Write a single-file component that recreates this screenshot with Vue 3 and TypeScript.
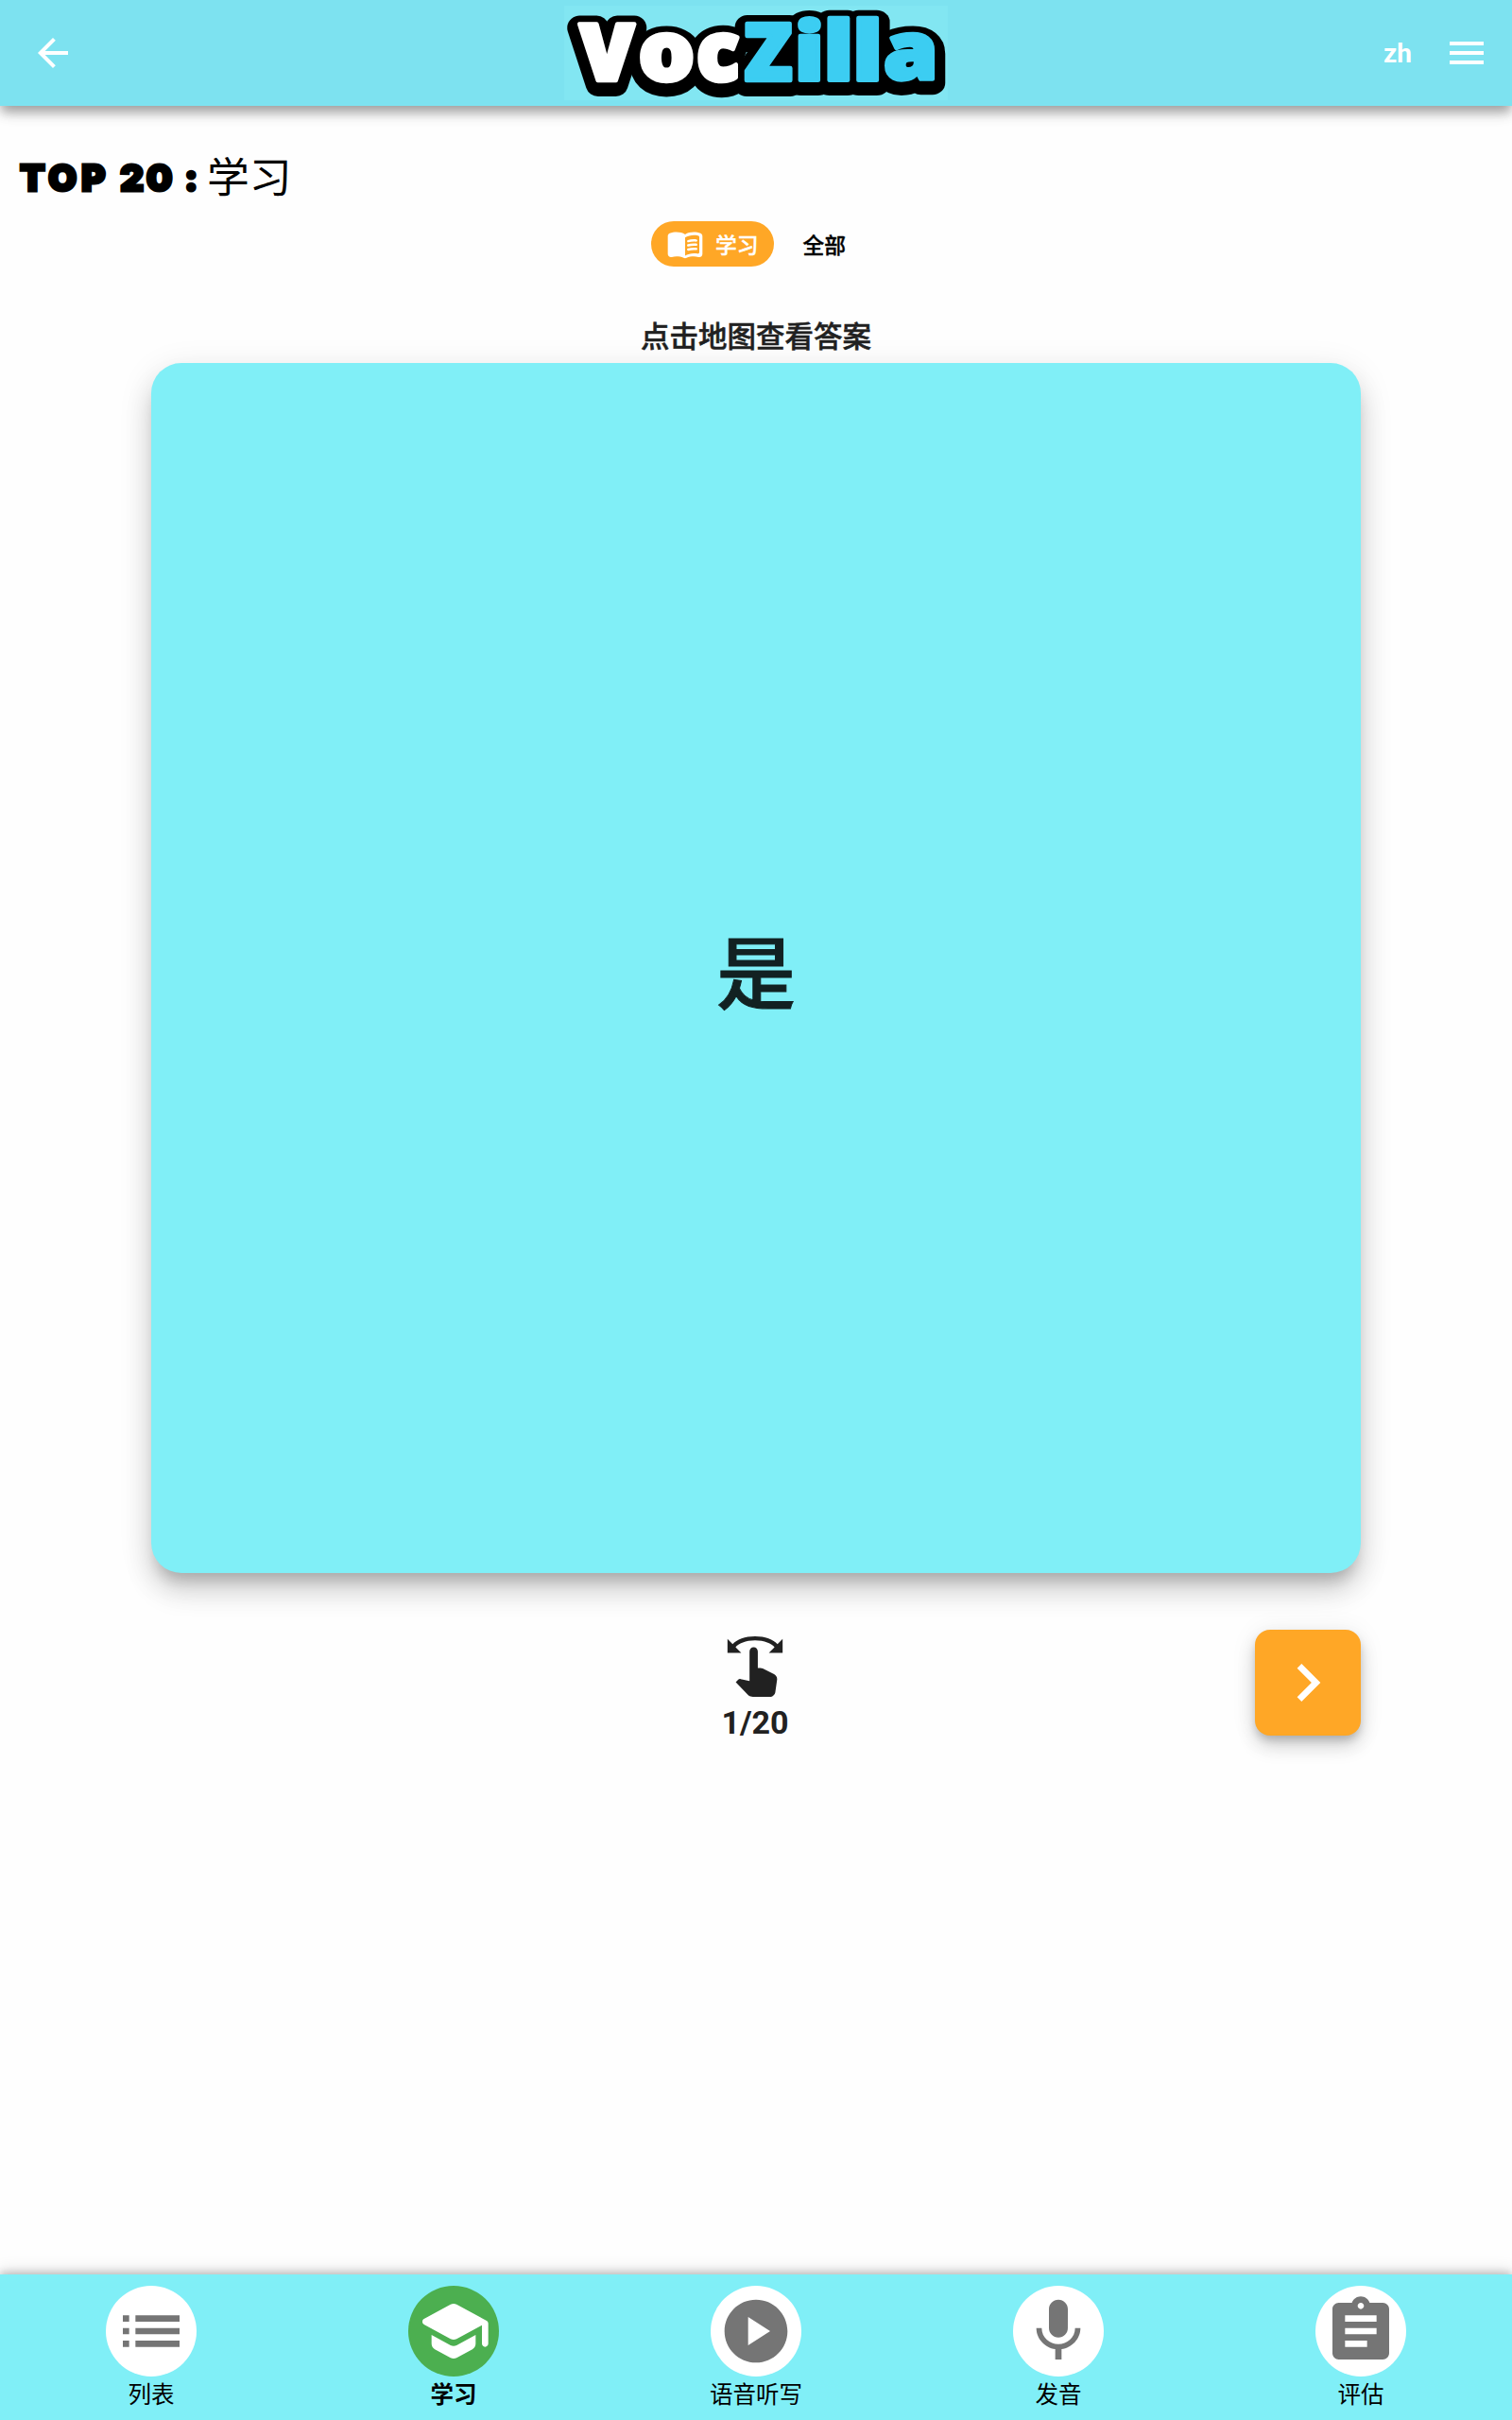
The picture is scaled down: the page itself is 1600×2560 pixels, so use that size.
<script setup lang="ts">
interface Letter {
  char: string
  x: number
  y: number
  sx: number
  sy: number
  color: string
}

interface NavItem {
  label: string
  path: string
  active?: boolean
}

const letters: Letter[] = [
  { char: 'V', x: 16.25, y: 78.75, sx: 0.836, sy: 0.831, color: '#fff' },
  { char: 'o', x: 78.5, y: 78.9, sx: 0.9375, sy: 0.868, color: '#fff' },
  { char: 'c', x: 139.9, y: 78.9, sx: 0.844, sy: 0.868, color: '#fff' },
  { char: 'Z', x: 190.6, y: 78.75, sx: 0.833, sy: 0.831, color: '#3ccdf2' },
  { char: 'i', x: 243.4, y: 78.75, sx: 0.976, sy: 0.851, color: '#3ccdf2' },
  { char: 'l', x: 274.25, y: 78.75, sx: 1, sy: 0.862, color: '#3ccdf2' },
  { char: 'l', x: 305, y: 78.75, sx: 1, sy: 0.862, color: '#3ccdf2' },
  { char: 'a', x: 338, y: 78, sx: 0.925, sy: 0.853, color: '#3ccdf2' },
]

const place = (l: Letter, dy = 0): string =>
  `translate(${l.x} ${l.y + dy}) scale(${l.sx} ${l.sy})`

const bookLine =
  'M13.98 11.01c-.32 0-.61-.2-.71-.52-.13-.39.09-.82.48-.94 1.54-.5 3.53-.66 5.36-.45.41.05.71.42.66.83-.05.41-.42.71-.83.66-1.62-.19-3.39-.04-4.73.39-.08.01-.16.03-.23.03z'

const nav: NavItem[] = [
  {
    label: '列表',
    path: 'M3 13h2v-2H3v2zm0 4h2v-2H3v2zm0-8h2V7H3v2zm4 4h14v-2H7v2zm0 4h14v-2H7v2zM7 7v2h14V7H7z',
  },
  {
    label: '学习',
    active: true,
    path: 'M5 13.18v2.81c0 .73.4 1.41 1.04 1.76l5 2.73c.6.33 1.32.33 1.92 0l5-2.73c.64-.35 1.04-1.03 1.04-1.76v-2.81l-6.04 3.3c-.6.33-1.32.33-1.92 0L5 13.18zm6.04-9.66-8.43 4.6c-.69.38-.69 1.38 0 1.76l8.43 4.6c.6.33 1.32.33 1.92 0L21 10.09V16c0 .55.45 1 1 1s1-.45 1-1V9.59c0-.37-.2-.7-.52-.88l-9.52-5.19c-.6-.32-1.32-.32-1.92 0z',
  },
  {
    label: '语音听写',
    path: 'M12 2C6.48 2 2 6.48 2 12s4.48 10 10 10 10-4.48 10-10S17.52 2 12 2zM9.5 16.5v-9l7 4.5-7 4.5z',
  },
  {
    label: '发音',
    path: 'M12 14c1.66 0 2.99-1.34 2.99-3L15 5c0-1.66-1.34-3-3-3S9 3.34 9 5v6c0 1.66 1.34 3 3 3zm5.3-3c0 3-2.54 5.1-5.3 5.1S6.7 14 6.7 11H5c0 3.41 2.72 6.23 6 6.72V21h2v-3.28c3.28-.48 6-3.3 6-6.72h-1.7z',
  },
  {
    label: '评估',
    path: 'M19 3h-4.18C14.4 1.84 13.3 1 12 1c-1.3 0-2.4.84-2.82 2H5c-1.1 0-2 .9-2 2v14c0 1.1.9 2 2 2h14c1.1 0 2-.9 2-2V5c0-1.1-.9-2-2-2zm-7 0c.55 0 1 .45 1 1s-.45 1-1 1-1-.45-1-1 .45-1 1-1zm2 14H7v-2h7v2zm3-4H7v-2h10v2zm0-4H7V7h10v2z',
  },
]
</script>

<template>
  <div class="app" lang="zh-CN">
    <header class="bar">
      <div class="side">
        <svg class="i48" viewBox="0 0 24 24"><path d="M20 11H7.83l5.59-5.59L12 4l-8 8 8 8 1.41-1.41L7.83 13H20v-2z" /></svg>
      </div>
      <svg class="logo" width="406" height="100" viewBox="0 0 406 100" aria-label="VocZilla">
        <g class="outline" aria-hidden="true">
          <text v-for="(l, i) in letters" :key="i" :transform="place(l, 4)">{{ l.char }}</text>
        </g>
        <g class="face">
          <text v-for="(l, i) in letters" :key="i" :transform="place(l)" :fill="l.color" :stroke="l.color">{{ l.char }}</text>
        </g>
      </svg>
      <div class="side right">
        <span class="lang">zh</span>
        <svg class="i48" viewBox="0 0 24 24"><path d="M3 18h18v-2H3v2zm0-5h18v-2H3v2zm0-7v2h18V6H3z" /></svg>
      </div>
    </header>

    <main>
      <h1><span class="top">TOP</span><span class="num">20</span><span class="colon">:</span>学习</h1>
      <div class="chips">
        <div class="chip on">
          <svg viewBox="0 0 24 24">
            <path d="M17.5 4.5c-1.95 0-4.05.4-5.5 1.5-1.45-1.1-3.55-1.5-5.5-1.5-1.45 0-2.99.22-4.28.79C1.49 5.62 1 6.33 1 7.14v11.28c0 1.3 1.22 2.26 2.48 1.94.98-.25 2.02-.36 3.02-.36 1.56 0 3.22.26 4.56.92.6.3 1.28.3 1.87 0 1.34-.67 3-.92 4.56-.92 1 0 2.04.11 3.02.36 1.26.33 2.48-.63 2.48-1.94V7.14c0-.81-.49-1.52-1.22-1.85-1.28-.57-2.82-.79-4.27-.79zM21 17.23c0 .63-.58 1.09-1.2.98-.75-.14-1.53-.2-2.3-.2-1.7 0-4.15.65-5.5 1.5V8c1.35-.85 3.8-1.5 5.5-1.5.92 0 1.83.09 2.7.28.46.1.8.51.8.98v9.47z" />
            <path :d="bookLine" />
            <path :d="bookLine" transform="translate(0 2.66)" />
            <path :d="bookLine" transform="translate(0 5.32)" />
          </svg>
          <span>学习</span>
        </div>
        <div class="chip"><span>全部</span></div>
      </div>
      <p class="hint">点击地图查看答案</p>
      <section class="card">是</section>
      <div class="controls">
        <div></div>
        <div class="progress">
          <svg viewBox="0 0 24 24">
            <path d="M18.89 14.75l-4.09-2.04c-.28-.14-.58-.21-.89-.21H13v-6c0-.83-.67-1.5-1.5-1.5S10 5.67 10 6.5v10.74l-3.25-.74c-.33-.07-.68.03-.92.28l-.83.84 4.54 4.79c.38.38 1.14.59 1.67.59h6.16c1 0 1.84-.73 1.98-1.72l.63-4.46c.12-.85-.32-1.69-1.09-2.07z" />
            <path d="M20.13 3.87C18.69 2.17 15.6 1 12 1S5.31 2.17 3.87 3.87L2 2v5h5L4.93 4.93c1-1.29 3.7-2.43 7.07-2.43s6.07 1.14 7.07 2.43L17 7h5V2l-1.87 1.87z" />
          </svg>
          <span>1/20</span>
        </div>
        <button class="next" type="button">
          <svg viewBox="0 0 24 24"><path d="M10 6L8.59 7.41 13.17 12l-4.58 4.59L10 18l6-6z" /></svg>
        </button>
      </div>
    </main>

    <nav>
      <div v-for="item in nav" :key="item.label" class="item" :class="{ active: item.active }">
        <div class="disc"><svg viewBox="0 0 24 24"><path :d="item.path" /></svg></div>
        <span>{{ item.label }}</span>
      </div>
    </nav>
  </div>
</template>

<style>
body {
  margin: 0;
  background: #fff;
}
</style>

<style scoped>
.app {
  width: 1600px;
  height: 2560px;
  display: flex;
  flex-direction: column;
  background: #fefefe;
  color: #000;
  font-family: Roboto, 'Noto Sans CJK SC', sans-serif;
}
svg {
  display: block;
  fill: currentColor;
}
.bar {
  flex: none;
  height: 112px;
  display: flex;
  align-items: center;
  justify-content: space-between;
  background: #7de2f0;
  color: #fff;
  box-shadow: 0 8px 10px -2px rgba(0, 0, 0, 0.22), 0 8px 14px rgba(0, 0, 0, 0.14), 0 2px 20px rgba(0, 0, 0, 0.1);
}
.side {
  flex: 1;
  display: flex;
  align-items: center;
  padding: 0 32px;
}
.right {
  justify-content: flex-end;
  padding: 0 24px 0 40px;
  gap: 34px;
}
.i48 {
  width: 48px;
  height: 48px;
}
.lang {
  font-size: 28px;
  font-weight: 700;
}
.logo {
  background: #82e6f2;
  overflow: visible;
}
.logo text {
  font-family: 'Open Sans', sans-serif;
  font-weight: 800;
  font-size: 100px;
  stroke-linejoin: round;
  vector-effect: non-scaling-stroke;
}
.outline {
  fill: #000;
  stroke: #000;
  stroke-width: 26px;
}
.face {
  stroke-width: 4.5px;
}
main {
  flex: 1;
  display: flex;
  flex-direction: column;
}
h1 {
  margin: 43px 0 0 21px;
  height: 68px;
  line-height: 68px;
  font-size: 44.8px;
  font-weight: 400;
  white-space: nowrap;
  display: flex;
}
h1 span {
  font-family: Inter, sans-serif;
  font-weight: 900;
  font-size: 39px;
  line-height: 66px;
  letter-spacing: 2.6px;
  -webkit-text-stroke: 3px #000;
}
h1 .top {
  width: 106px;
  letter-spacing: 4.6px;
}
.num {
  width: 68px;
}
.colon {
  width: 24px;
}
.chips {
  margin-top: 11px;
  display: flex;
  justify-content: center;
  height: 48px;
}
.chip {
  display: flex;
  align-items: center;
  height: 48px;
  padding: 0 16px;
  border-radius: 24px;
  font-size: 22.75px;
  font-weight: 500;
  line-height: 44px;
  -webkit-text-stroke: 0.4px currentColor;
}
.chip span {
  padding-top: 5px;
}
.chip svg {
  width: 40px;
  height: 40px;
  margin-right: 12px;
}
.chip.on {
  background: #ffa726;
  color: #fff;
  margin-right: 15px;
}
.hint {
  margin: 53px 0 0;
  height: 49px;
  line-height: 44px;
  text-align: center;
  font-size: 30.5px;
  font-weight: 500;
  color: #212121;
  -webkit-text-stroke: 0.5px currentColor;
}
.card {
  box-sizing: border-box;
  flex: none;
  width: 1280px;
  height: 1280px;
  margin: 0 auto;
  display: flex;
  align-items: center;
  justify-content: center;
  border-radius: 32px;
  background: #80eff7;
  color: #122122;
  font-size: 84px;
  font-weight: 500;
  -webkit-text-stroke: 1px currentColor;
  box-shadow: 0 14px 14px -6px rgba(0, 0, 0, 0.18), 0 20px 28px 2px rgba(0, 0, 0, 0.12), 0 8px 36px 2px rgba(0, 0, 0, 0.09);
}
.controls {
  width: 1280px;
  margin: 60px auto 0;
  display: grid;
  grid-template-columns: 1fr auto 1fr;
}
.progress {
  display: flex;
  flex-direction: column;
  align-items: center;
  color: #212121;
  font-size: 34px;
  font-weight: 700;
  line-height: 48px;
  padding: 4px 2px 0 0;
}
.progress svg {
  width: 70px;
  height: 70px;
}
.next {
  justify-self: end;
  width: 112px;
  height: 112px;
  padding: 0;
  display: flex;
  align-items: center;
  justify-content: center;
  border: 0;
  border-radius: 16px;
  background: #ffa726;
  color: #fff;
  box-shadow: 0 6px 10px -2px rgba(0, 0, 0, 0.2), 0 12px 20px rgba(0, 0, 0, 0.14), 0 2px 28px rgba(0, 0, 0, 0.08);
}
.next svg {
  width: 80px;
  height: 80px;
}
nav {
  flex: none;
  height: 142px;
  padding-top: 12px;
  display: flex;
  background: #80eff7;
  box-shadow: 0 -2px 8px rgba(0, 0, 0, 0.2), 0 -4px 16px rgba(0, 0, 0, 0.12);
}
.item {
  flex: 1;
  display: flex;
  flex-direction: column;
  align-items: center;
  font-size: 24.5px;
  line-height: 40px;
}
.disc {
  flex: none;
  width: 96px;
  height: 96px;
  display: flex;
  align-items: center;
  justify-content: center;
  border-radius: 50%;
  background: #fff;
  color: #757575;
}
.disc svg {
  width: 80px;
  height: 80px;
}
.active {
  font-weight: 700;
}
.active .disc {
  background: #4caf50;
  color: #fff;
}
</style>
